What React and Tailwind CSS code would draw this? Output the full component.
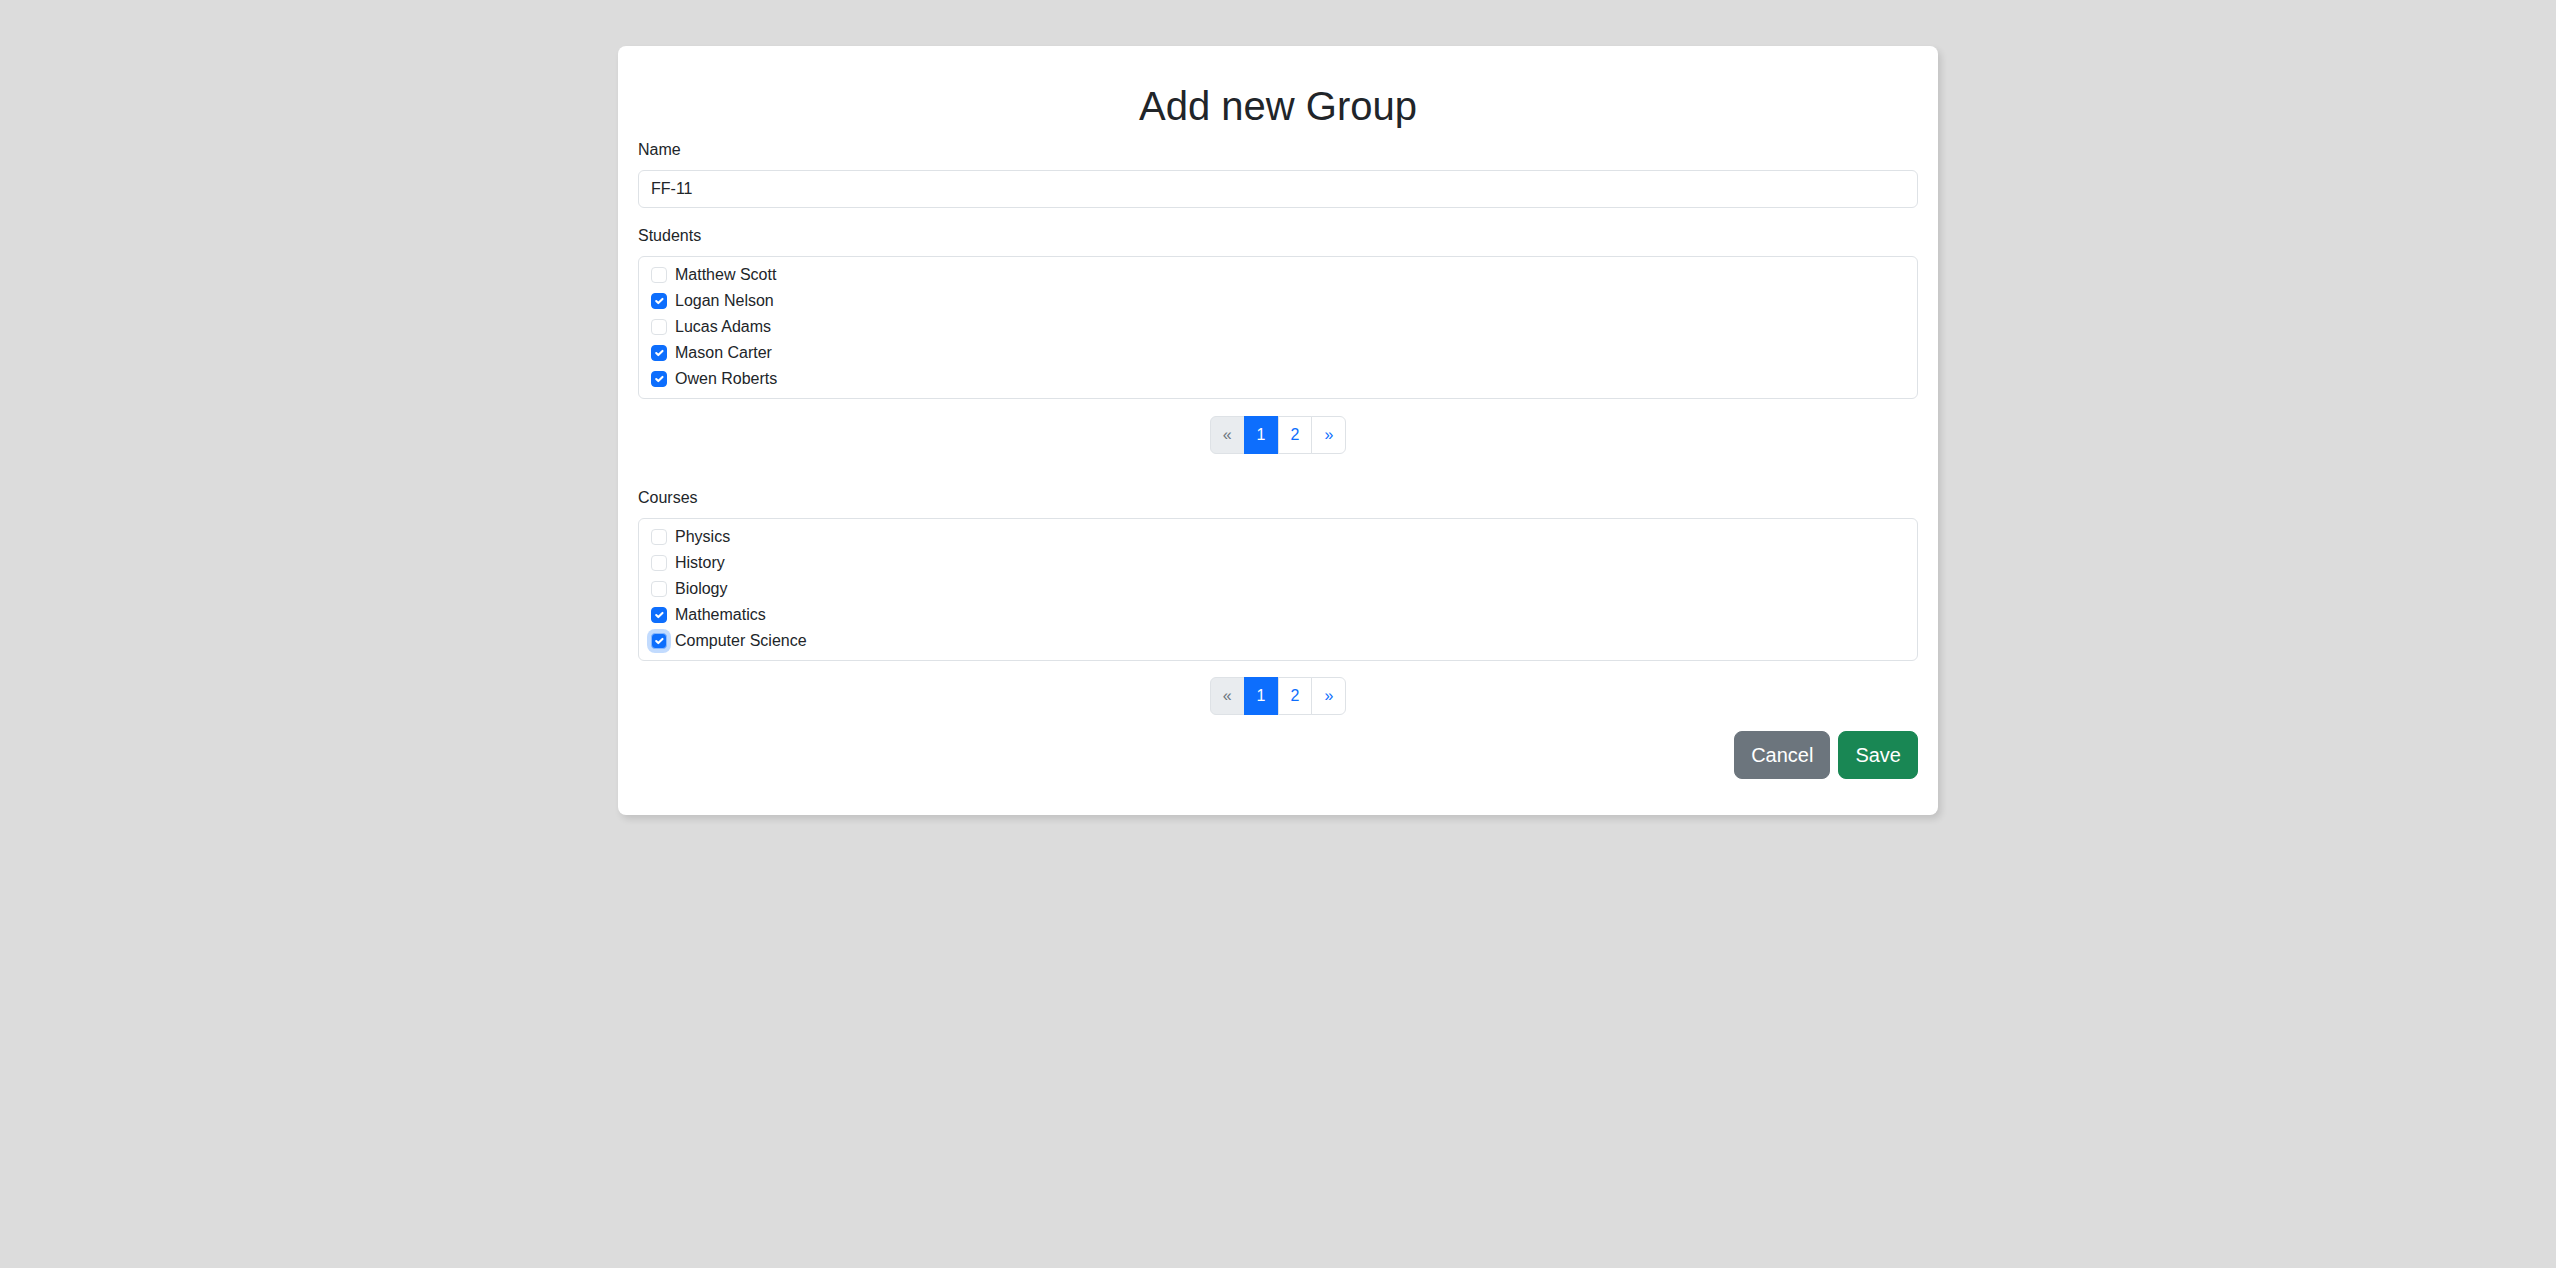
import { useState } from "react";

const students = [
  { id: 1, name: "Matthew Scott", checked: false },
  { id: 2, name: "Logan Nelson", checked: true },
  { id: 3, name: "Lucas Adams", checked: false },
  { id: 4, name: "Mason Carter", checked: true },
  { id: 5, name: "Owen Roberts", checked: true },
];

const courses = [
  { id: 1, name: "Physics", checked: false },
  { id: 2, name: "History", checked: false },
  { id: 3, name: "Biology", checked: false },
  { id: 4, name: "Mathematics", checked: true },
  { id: 5, name: "Computer Science", checked: true, focused: true },
];

function Check({ checked, focused, onToggle }) {
  return (
    <span
      onClick={onToggle}
      className={`mt-[4px] flex h-4 w-4 shrink-0 items-center justify-center rounded-[4px] border ${
        checked ? "border-[#0d6efd] bg-[#0d6efd]" : "border-[#dee2e6] bg-white"
      } ${focused ? "border-[#86b7fe] shadow-[0_0_0_4px_rgba(13,110,253,0.25)]" : ""}`}
    >
      {checked && (
        <svg viewBox="0 0 20 20" className="h-4 w-4" fill="none">
          <path d="m6 10 3 3 6-6" stroke="#fff" strokeWidth="3" strokeLinecap="round" strokeLinejoin="round" />
        </svg>
      )}
    </span>
  );
}

function CheckList({ items }) {
  const [state, setState] = useState(items);
  const toggle = (id) =>
    setState((prev) => prev.map((it) => (it.id === id ? { ...it, checked: !it.checked } : it)));

  return (
    <div className="rounded-[6px] border border-[#dee2e6] px-3 pt-[6px] pb-[5px]">
      {state.map((it) => (
        <div key={it.id} className="mb-[2px] flex min-h-6 items-start gap-2">
          <Check checked={it.checked} focused={it.focused} onToggle={() => toggle(it.id)} />
          <span className="text-base leading-6">{it.name}</span>
        </div>
      ))}
    </div>
  );
}

function Pagination() {
  return (
    <div className="flex justify-center">
      <ul className="flex text-base leading-6">
        <li className="rounded-l-[6px] border border-[#dee2e6] bg-[#e9ecef] px-3 py-[6px] text-[#6c757d]">«</li>
        <li className="-ml-px border border-[#0d6efd] bg-[#0d6efd] px-3 py-[6px] text-white">1</li>
        <li className="-ml-px border border-[#dee2e6] bg-white px-3 py-[6px] text-[#0d6efd]">2</li>
        <li className="-ml-px rounded-r-[6px] border border-[#dee2e6] bg-white px-3 py-[6px] text-[#0d6efd]">»</li>
      </ul>
    </div>
  );
}

export default function App() {
  const [name, setName] = useState("FF-11");

  return (
    <div
      className="min-h-screen bg-[#dcdcdc] pt-[46px] text-[#212529]"
      style={{ fontFamily: '"Liberation Sans", Arial, sans-serif' }}
    >
      <div className="mx-auto w-[1320px] rounded-lg bg-white px-5 pt-9 pb-9 shadow-[3px_4px_7px_rgba(0,0,0,0.12)]">
        <h1 className="mb-2 text-center text-[40px] leading-[48px]">Add new Group</h1>

        <label className="mb-2 block text-base leading-6">Name</label>
        <input
          value={name}
          onChange={(e) => setName(e.target.value)}
          className="mb-4 block h-[38px] w-full rounded-[6px] border border-[#dee2e6] px-3 text-base text-[#212529] outline-none"
        />

        <label className="mb-2 block text-base leading-6">Students</label>
        <CheckList items={students} />
        <div className="mt-[17px] mb-8">
          <Pagination />
        </div>

        <label className="mb-2 block text-base leading-6">Courses</label>
        <CheckList items={courses} />
        <div className="mt-4">
          <Pagination />
        </div>

        <div className="mt-4 flex justify-end gap-2">
          <button className="rounded-lg border border-[#6c757d] bg-[#6c757d] px-4 py-2 text-[20px] leading-[30px] text-white">
            Cancel
          </button>
          <button className="rounded-lg border border-[#198754] bg-[#198754] px-4 py-2 text-[20px] leading-[30px] text-white">
            Save
          </button>
        </div>
      </div>
    </div>
  );
}
